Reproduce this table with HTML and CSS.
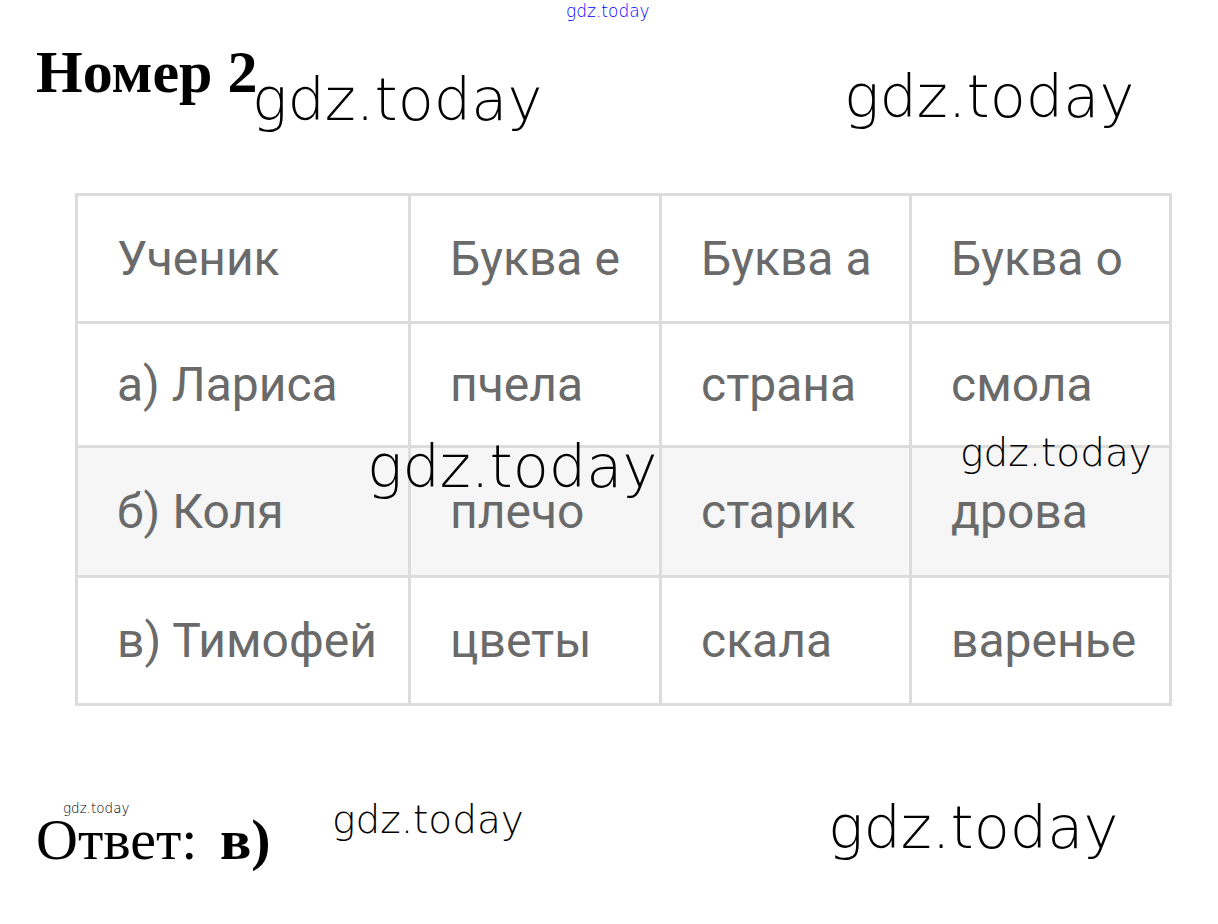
FILE: index.html
```html
<!DOCTYPE html>
<html lang="ru">
<head>
<meta charset="utf-8">
<title>Номер 2</title>
<link rel="stylesheet" href="styles.css">
</head>
<body>
<div class="page">
  <h1 class="title">Номер 2</h1>

  <div class="grid">
    <div class="cell">Ученик</div>
    <div class="cell">Буква е</div>
    <div class="cell">Буква а</div>
    <div class="cell">Буква о</div>

    <div class="cell">а) Лариса</div>
    <div class="cell">пчела</div>
    <div class="cell">страна</div>
    <div class="cell">смола</div>

    <div class="cell alt">б) Коля</div>
    <div class="cell alt">плечо</div>
    <div class="cell alt">старик</div>
    <div class="cell alt">дрова</div>

    <div class="cell">в) Тимофей</div>
    <div class="cell">цветы</div>
    <div class="cell">скала</div>
    <div class="cell">варенье</div>
  </div>

  <p class="answer">Ответ: <b>в)</b></p>

  <span class="wm wm-blue">gdz.today</span>
  <span class="wm wm-l wm1">gdz.today</span>
  <span class="wm wm-l wm2">gdz.today</span>
  <span class="wm wm-l wm3">gdz.today</span>
  <span class="wm wm-m wm4">gdz.today</span>
  <span class="wm wm-s wm5">gdz.today</span>
  <span class="wm wm-m wm6">gdz.today</span>
  <span class="wm wm-l wm7">gdz.today</span>
</div>
</body>
</html>
```

FILE: styles.css
```css
html, body {
  margin: 0;
  padding: 0;
  background: #ffffff;
}

.page {
  position: relative;
  width: 1218px;
  height: 924px;
  overflow: hidden;
  padding: 43px 0 0 36px;
  box-sizing: border-box;
}

.title {
  margin: 0;
  font-family: "Liberation Serif", "Times New Roman", serif;
  font-weight: 700;
  font-size: 60px;
  line-height: 58px;
  color: #000;
}

.grid {
  margin: 92px 0 0 39px;
  width: 1097px;
  box-sizing: border-box;
  display: grid;
  grid-template-columns: 330px 248px 247px 257px;
  grid-template-rows: 125px 121px 127px 125px;
  gap: 3px;
  padding: 3px;
  background: #dcdcdc;
}

.cell {
  background: #ffffff;
  display: flex;
  align-items: center;
  padding-left: 39px;
  font-family: Roboto, "Liberation Sans", sans-serif;
  font-size: 48px;
  line-height: 56px;
  color: #6a6a6a;
  white-space: nowrap;
}

.cell.alt {
  background: #f6f6f6;
}

.answer {
  margin: 105px 0 0 0;
  font-family: "Liberation Serif", "Times New Roman", serif;
  font-size: 58px;
  line-height: 58px;
  color: #000;
}

.answer b {
  font-weight: 700;
  margin-left: 8px;
}

.wm {
  position: absolute;
  font-family: "DejaVu Sans", sans-serif;
  font-weight: 200;
  line-height: 1;
  color: #000;
  white-space: nowrap;
}

.wm-l { font-size: 59px; }
.wm-m { font-size: 39px; }
.wm-s { font-size: 13.5px; }

.wm-blue {
  font-size: 17px;
  color: #0000ff;
  left: 566px;
  top: 3px;
}

.wm1 { left: 252px; top: 70px; }
.wm2 { left: 844px; top: 67px; }
.wm3 { left: 367px; top: 437px; }
.wm4 { left: 960px; top: 433px; }
.wm5 { left: 63px; top: 802px; }
.wm6 { left: 332px; top: 800px; }
.wm7 { left: 828px; top: 798px; }
```
